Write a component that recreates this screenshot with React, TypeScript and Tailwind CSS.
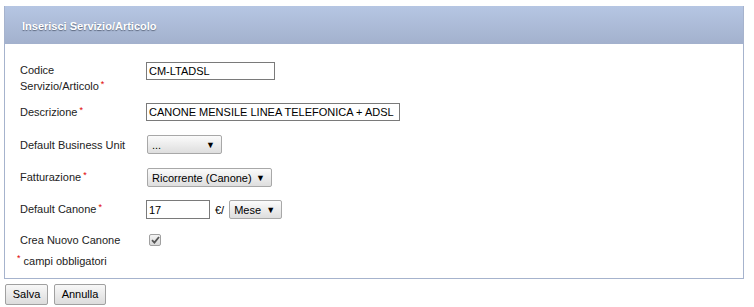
import React from "react";

const font = { fontFamily: '"Liberation Sans", Arial, sans-serif' };

function Req() {
    return <span className="relative -top-[3px] ml-[2px] text-[9px] text-[#e00000]">*</span>;
}

function Select({ value, width }: { value: string; width: string }) {
    return (
        <div
            className={`flex h-[19px] ${width} items-center justify-between whitespace-nowrap rounded-[2px] border border-[#a8a8a8] bg-gradient-to-b from-[#fbfbfb] to-[#dedede] pl-[4px] pr-[6px] text-[11px] text-black`}
        >
            <span>{value}</span>
            <span className="text-[9px]">▼</span>
        </div>
    );
}

function Button({ label, width }: { label: string; width: string }) {
    return (
        <button
            className={`flex h-[21px] ${width} items-center justify-center rounded-[2px] border border-[#a0a0a0] bg-gradient-to-b from-[#f8f8f8] to-[#dcdcdc] text-[11px] text-black`}
        >
            {label}
        </button>
    );
}

export default function App() {
    return (
        <div className="min-h-[307px] whitespace-nowrap bg-white pl-[4px] pt-[6px]" style={font}>
            <div className="w-[740px] border-x border-b border-[#a6b3cd]">
                {/* Header */}
                <div className="flex h-[38px] items-center bg-gradient-to-b from-[#b6c6e3] to-[#a3b1cd] pl-[17px] pt-[2px]">
                    <span className="text-[11px] font-bold text-white [text-shadow:0_1px_1px_rgba(60,70,90,0.7)]">
                        Inserisci Servizio/Articolo
                    </span>
                </div>

                <div className="pl-[15px] pb-[9px] text-[11px] leading-[16px] text-[#222]">
                    <div className="mt-[18px] flex items-start">
                        <div className="w-[126px]">
                            Codice
                            <br />
                            Servizio/Articolo
                            <Req />
                        </div>
                        <div className="flex h-[18px] w-[129px] items-center border border-[#7a7a7a] pl-[2px] text-black">
                            CM-LTADSL
                        </div>
                    </div>

                    <div className="mt-[8px] flex h-[18px] items-center">
                        <div className="w-[126px]">
                            Descrizione
                            <Req />
                        </div>
                        <div className="flex h-[18px] w-[254px] items-center border border-[#7a7a7a] pl-[2px] text-black">
                            CANONE MENSILE LINEA TELEFONICA + ADSL
                        </div>
                    </div>

                    <div className="mt-[14px] flex h-[19px] items-center">
                        <div className="w-[127px]">Default Business Unit</div>
                        <Select value="..." width="w-[75px]" />
                    </div>

                    <div className="mt-[14px] flex h-[19px] items-center">
                        <div className="w-[127px]">
                            Fatturazione
                            <Req />
                        </div>
                        <Select value="Ricorrente (Canone)" width="w-[125px]" />
                    </div>

                    <div className="mt-[13px] flex h-[19px] items-center">
                        <div className="w-[126px]">
                            Default Canone
                            <Req />
                        </div>
                        <div className="flex h-[19px] w-[64px] items-center border border-[#7a7a7a] pl-[2px] text-black">
                            17
                        </div>
                        <span className="ml-[5px] mr-[5px] text-black">€/</span>
                        <Select value="Mese" width="w-[53px]" />
                    </div>

                    <div className="mt-[14px] flex h-[13px] items-center">
                        <div className="w-[129px]">Crea Nuovo Canone</div>
                        <div className="flex h-[12px] w-[12px] items-center justify-center rounded-[2px] border border-[#a0a0a0] bg-gradient-to-b from-[#f4f4f4] to-[#d8d8d8]">
                            <svg width="9" height="8" viewBox="0 0 9 8">
                                <path d="M1 4.2 L3.4 6.6 L8 1" fill="none" stroke="#555" strokeWidth="1.8" />
                            </svg>
                        </div>
                    </div>

                    <div className="-ml-[3px] mt-[7px] flex items-center">
                        <span className="relative -top-[3px] mr-[3px] text-[9px] text-[#e00000]">*</span>
                        campi obbligatori
                    </div>
                </div>
            </div>

            <div className="mt-[5px] ml-[1px] flex gap-[6px]">
                <Button label="Salva" width="w-[43px]" />
                <Button label="Annulla" width="w-[52px]" />
            </div>
        </div>
    );
}
